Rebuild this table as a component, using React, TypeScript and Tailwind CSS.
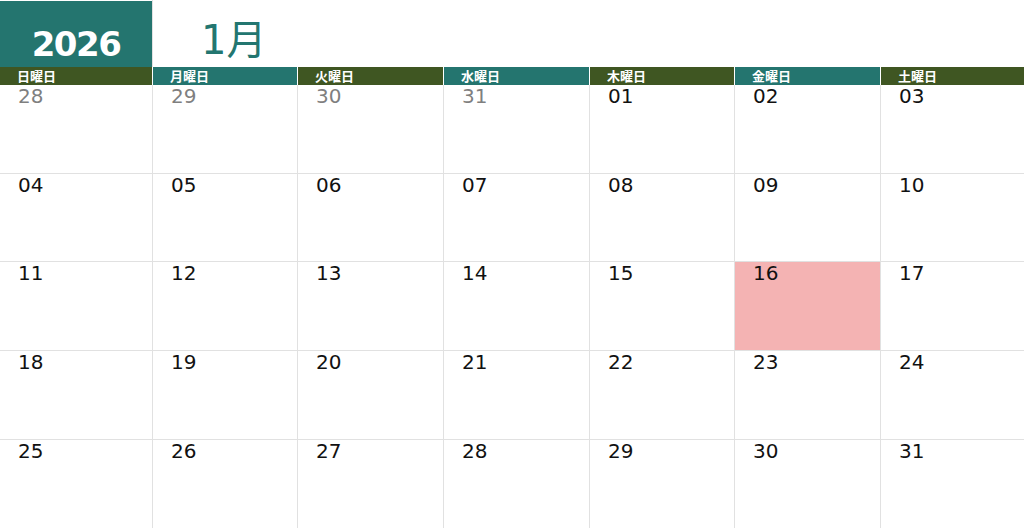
import React from "react";

const days = ["日曜日", "月曜日", "火曜日", "水曜日", "木曜日", "金曜日", "土曜日"];
const headerBg = [
  "bg-[#3f5622]",
  "bg-[#24756f]",
  "bg-[#3f5622]",
  "bg-[#24756f]",
  "bg-[#3f5622]",
  "bg-[#24756f]",
  "bg-[#3f5622]",
];

type Cell = { d: string; prev?: boolean; today?: boolean };

const cells: Cell[] = [
  { d: "28", prev: true },
  { d: "29", prev: true },
  { d: "30", prev: true },
  { d: "31", prev: true },
  { d: "01" },
  { d: "02" },
  { d: "03" },
  ...["04", "05", "06", "07", "08", "09", "10"].map((d) => ({ d })),
  ...["11", "12", "13", "14", "15"].map((d) => ({ d })),
  { d: "16", today: true },
  { d: "17" },
  ...["18", "19", "20", "21", "22", "23", "24"].map((d) => ({ d })),
  ...["25", "26", "27", "28", "29", "30", "31"].map((d) => ({ d })),
];

export default function App() {
  return (
    <div
      className="w-[1024px] h-[528px] bg-white overflow-hidden"
      style={{ fontFamily: '"DejaVu Sans", "Noto Sans CJK JP", sans-serif' }}
    >
      {/* Title row */}
      <div className="flex h-[67px]">
        <div className="w-[152px] mt-px bg-[#24756f] text-white font-bold text-[34px] leading-[34px] tracking-[-1.5px] text-center pt-[26px]">
          2026
        </div>
        <div className="w-px bg-[#e1e1e1]" />
        <div className="flex-1 pl-[48px] pt-[20px] text-[#237670] text-[40px] leading-[40px]">
          1月
        </div>
      </div>

      {/* Header row */}
      <div className="grid grid-cols-[153px_145px_146px_146px_145px_146px_1fr] h-[18px]">
        {days.map((d, i) => (
          <div key={d} className={i < 6 ? "pr-px bg-white" : "bg-white"}>
            <div
              className={`${headerBg[i]} h-[18px] pl-[17px] text-white font-bold text-[13px] leading-[18px]`}
              style={{ fontFamily: '"Noto Sans CJK JP", sans-serif' }}
            >
              {d}
            </div>
          </div>
        ))}
      </div>

      {/* Body */}
      <div className="grid grid-cols-[153px_145px_146px_146px_145px_146px_1fr] grid-rows-[89px_88px_89px_89px_89px]">
        {cells.map((c, i) => (
          <div
            key={i}
            className={`border-b border-[#e1e1e1] ${i % 7 < 6 ? "border-r" : ""} ${
              c.today ? "bg-[#f4b3b3]" : "bg-white"
            } pl-[18px] pt-px text-[20px] leading-[20px] ${
              c.prev ? "text-[#7f7f7f]" : "text-[#111]"
            }`}
          >
            {c.d}
          </div>
        ))}
      </div>
    </div>
  );
}
